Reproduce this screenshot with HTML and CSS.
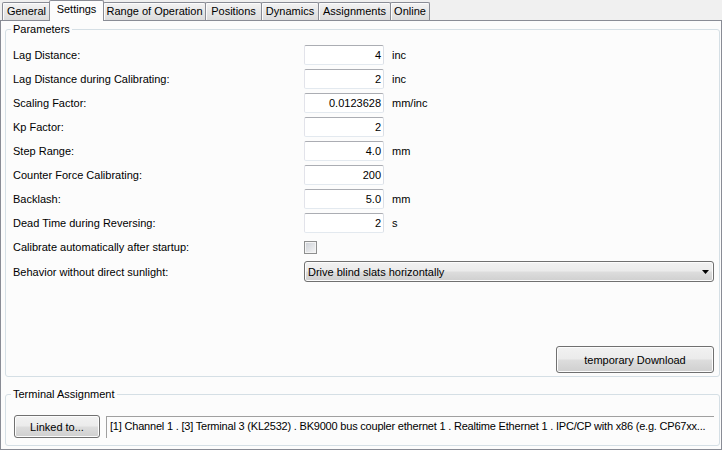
FILE: index.html
```html
<!DOCTYPE html>
<html>
<head>
<meta charset="utf-8">
<link rel="stylesheet" href="styles.css">
</head>
<body>
<div class="tabs">
  <div class="tab t-general">General</div>
  <div class="tab active t-settings">Settings</div>
  <div class="tab t-range">Range of Operation</div>
  <div class="tab t-pos">Positions</div>
  <div class="tab t-dyn">Dynamics</div>
  <div class="tab t-assign">Assignments</div>
  <div class="tab t-online">Online</div>
</div>
<div class="panel">
  <fieldset class="group params">
    <legend>Parameters</legend>
    <div class="grid">
      <div class="lbl">Lag Distance:</div><div class="input">4</div><div class="unit">inc</div>
      <div class="lbl">Lag Distance during Calibrating:</div><div class="input">2</div><div class="unit">inc</div>
      <div class="lbl">Scaling Factor:</div><div class="input">0.0123628</div><div class="unit">mm/inc</div>
      <div class="lbl">Kp Factor:</div><div class="input">2</div><div class="unit"></div>
      <div class="lbl">Step Range:</div><div class="input">4.0</div><div class="unit">mm</div>
      <div class="lbl">Counter Force Calibrating:</div><div class="input">200</div><div class="unit"></div>
      <div class="lbl">Backlash:</div><div class="input">5.0</div><div class="unit">mm</div>
      <div class="lbl">Dead Time during Reversing:</div><div class="input">2</div><div class="unit">s</div>
      <div class="lbl">Calibrate automatically after startup:</div><div class="checkcell"><span class="checkbox"></span></div><div class="unit"></div>
      <div class="lbl">Behavior without direct sunlight:</div>
      <div class="combo"><span class="combo-text">Drive blind slats horizontally</span><svg class="arrow" width="7" height="4" viewBox="0 0 7 4"><path d="M0 0H7L3.5 4Z" fill="#000"/></svg></div>
    </div>
    <div class="btnrow"><div class="btn dl">temporary Download</div></div>
  </fieldset>
  <fieldset class="group term">
    <legend>Terminal Assignment</legend>
    <div class="termrow">
      <div class="btn linked">Linked to...</div>
      <div class="field">[1] Channel 1 . [3] Terminal 3 (KL2532) . BK9000 bus coupler ethernet 1 . Realtime Ethernet 1 . IPC/CP with x86 (e.g. CP67xx...</div>
    </div>
  </fieldset>
</div>
</body>
</html>
```
FILE: styles.css
```css
html, body {
  margin: 0;
  padding: 0;
}
body {
  width: 722px;
  height: 450px;
  overflow: hidden;
  background: #f0f0f0;
  font: 11px "Liberation Sans", Arial, sans-serif;
  color: #000;
}
.tabs {
  display: flex;
  height: 20px;
  align-items: flex-end;
}
.tab {
  box-sizing: border-box;
  height: 18px;
  border: 1px solid #898c95;
  border-bottom: none;
  border-radius: 2px 2px 0 0;
  background: linear-gradient(#f3f3f3, #e6e6e6 55%, #dcdcdc);
  box-shadow: inset 1px 1px 0 #fbfbfb;
  text-align: center;
  line-height: 17px;
  margin-left: -1px;
  white-space: nowrap;
}
.t-general { margin-left: 2px; width: 49px; }
.t-settings { width: 55px; }
.t-range { width: 103px; }
.t-pos { width: 57px; }
.t-dyn { width: 58px; }
.t-assign { width: 73px; }
.t-online { width: 40px; }
.tab.active {
  height: 21px;
  margin-bottom: -1px;
  margin-left: -2px;
  background: #fcfcfc;
  box-shadow: none;
  position: relative;
  z-index: 1;
}
.panel {
  box-sizing: border-box;
  height: 430px;
  border: 1px solid #898c95;
  background: #fcfcfc;
  padding: 2px 1px 0 4px;
  display: flex;
  flex-direction: column;
}
.group {
  margin: 0;
  border: 1px solid #d5dfe5;
  border-radius: 3px;
  min-width: 0;
}
.group legend {
  padding: 0 2px;
  line-height: 13px;
}
.params {
  padding: 9px 5px 3px 7px;
}
.params legend {
  margin-left: -2px;
}
.grid {
  display: grid;
  grid-template-columns: 291px 80px 1fr;
  row-gap: 4px;
  align-items: center;
}
.lbl {
  white-space: nowrap;
}
.input {
  box-sizing: border-box;
  height: 20px;
  border: 1px solid;
  border-color: #abadb3 #dbdfe6 #e3e9ef #e2e3ea;
  border-radius: 2px;
  background: #fff;
  text-align: right;
  padding-right: 2px;
  line-height: 18px;
}
.unit {
  padding-left: 8px;
}
.checkcell {
  height: 20px;
  display: flex;
  align-items: center;
}
.checkbox {
  box-sizing: border-box;
  width: 13px;
  height: 13px;
  border: 1px solid #8e8f8f;
  background: linear-gradient(135deg, #cbcfd5, #f6f6f6);
  box-shadow: inset 0 0 0 1px #f4f4f4;
  margin-top: 1px;
}
.combo, .btn {
  box-sizing: border-box;
  border: 1px solid #707070;
  border-radius: 3px;
  background: linear-gradient(#f2f2f2 0%, #ebebeb 48%, #dddddd 52%, #cfcfcf 100%);
  box-shadow: inset 0 0 0 1px #fcfcfc;
}
.combo {
  grid-column: 2 / 4;
  height: 21px;
  display: flex;
  align-items: center;
  justify-content: space-between;
  padding: 0 3px 0 3px;
}
.combo-text {
  white-space: nowrap;
}
.arrow {
  display: block;
  margin-right: 1px;
}
.btnrow {
  display: flex;
  justify-content: flex-end;
  margin-top: 64px;
}
.btn {
  display: flex;
  align-items: center;
  justify-content: center;
  white-space: nowrap;
}
.dl {
  width: 158px;
  height: 27px;
}
.term {
  margin-top: 11px;
  padding: 14px 5px 7px 8px;
}
.term legend {
  margin-left: -3px;
}
.termrow {
  display: flex;
  align-items: flex-start;
  gap: 6px;
}
.linked {
  width: 86px;
  height: 23px;
  flex: none;
}
.field {
  box-sizing: border-box;
  flex: 1;
  min-width: 0;
  height: 22px;
  margin-top: 1px;
  border-top: 1px solid #a0a0a0;
  border-left: 1px solid #a0a0a0;
  padding-left: 3px;
  line-height: 18px;
  white-space: nowrap;
  overflow: hidden;
  letter-spacing: -0.2px;
}
```
